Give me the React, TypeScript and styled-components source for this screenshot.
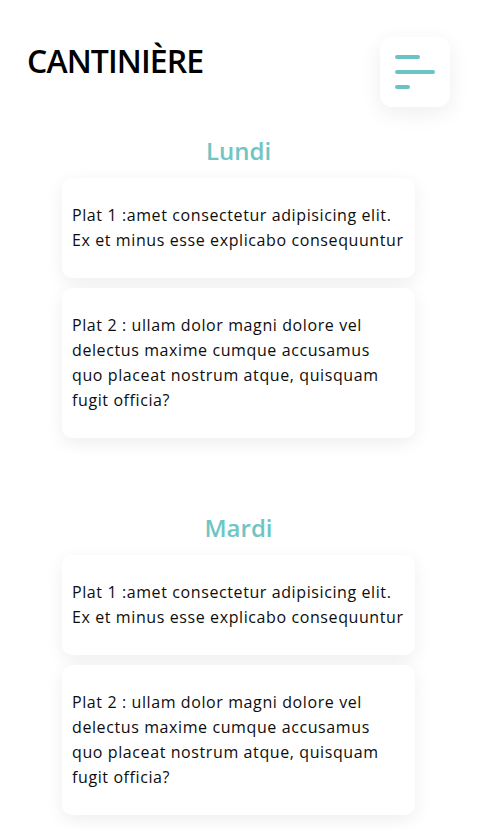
import React from "react";
import styled, { createGlobalStyle } from "styled-components";

const GlobalStyle = createGlobalStyle`
  html, body {
    margin: 0;
    padding: 0;
    background: #ffffff;
    font-family: "Open Sans", "DejaVu Sans", sans-serif;
    color: #111111;
  }

  ::-webkit-scrollbar {
    width: 3px;
  }

  ::-webkit-scrollbar-track {
    background: #f1f1f1;
  }

  ::-webkit-scrollbar-thumb {
    background: #c1c1c1;
  }
`;

const Page = styled.div`
  padding-bottom: 55px;
`;

const Header = styled.header`
  display: flex;
  justify-content: space-between;
  align-items: flex-start;
  padding: 37px 33px 29px 27px;
`;

const Logo = styled.h1`
  margin: 4px 0 0;
  font-size: 32px;
  line-height: 40px;
  font-weight: 600;
  color: #000000;
  letter-spacing: -0.9px;
`;

const MenuButton = styled.button`
  width: 70px;
  height: 70px;
  border: none;
  border-radius: 12px;
  background: #ffffff;
  box-shadow: 0 6px 22px rgba(0, 0, 0, 0.07);
  display: flex;
  flex-direction: column;
  justify-content: center;
  align-items: flex-start;
  gap: 11px;
  padding: 0 15px;
  cursor: pointer;
`;

const MenuLine = styled.span<{ $w: number }>`
  display: block;
  width: ${(p) => p.$w}px;
  height: 4px;
  border-radius: 2px;
  background: #6bc4c3;
`;

const Day = styled.section`
  display: flex;
  flex-direction: column;
  align-items: center;
  margin-bottom: 75px;
  padding-right: 6px;
`;

const DayTitle = styled.h2`
  margin: 0 0 12px;
  font-size: 24px;
  line-height: 30px;
  font-weight: 600;
  color: #6fc5c4;
`;

const Meals = styled.div`
  display: flex;
  flex-direction: column;
  gap: 10px;
  width: 353px;
`;

const MealCard = styled.div`
  background: #ffffff;
  border-radius: 10px;
  box-shadow: 0 5px 18px rgba(0, 0, 0, 0.07);
  padding: 25px 10px;
`;

const MealText = styled.p`
  margin: 0;
  font-size: 16px;
  line-height: 25px;
  letter-spacing: 0.6px;
  color: #0d0d0d;
`;

const MealLine = styled.span`
  display: block;
  white-space: nowrap;
`;

const days = ["Lundi", "Mardi", "Mercredi", "Jeudi", "Vendredi"];

// lines split as on the original page
const meals = [
  ["Plat 1 :amet consectetur adipisicing elit.", "Ex et minus esse explicabo consequuntur"],
  [
    "Plat 2 : ullam dolor magni dolore vel",
    "delectus maxime cumque accusamus",
    "quo placeat nostrum atque, quisquam",
    "fugit officia?",
  ],
];

const App: React.FC = () => {
  return (
    <Page>
      <GlobalStyle />
      <Header>
        <Logo>CANTINIÈRE</Logo>
        <MenuButton aria-label="Menu">
          <MenuLine $w={25} />
          <MenuLine $w={40} />
          <MenuLine $w={15} />
        </MenuButton>
      </Header>
      {days.map((day) => (
        <Day key={day}>
          <DayTitle>{day}</DayTitle>
          <Meals>
            {meals.map((lines) => (
              <MealCard key={lines[0]}>
                <MealText>
                  {lines.map((line) => (
                    <MealLine key={line}>{line}</MealLine>
                  ))}
                </MealText>
              </MealCard>
            ))}
          </Meals>
        </Day>
      ))}
    </Page>
  );
};

export default App;
